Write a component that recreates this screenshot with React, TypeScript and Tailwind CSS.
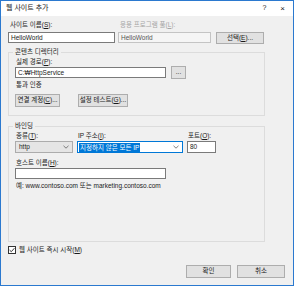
import React from "react";

function U({ children }: { children: React.ReactNode }) {
  return <span className="underline">{children}</span>;
}

function Btn({ children, className = "" }: { children: React.ReactNode; className?: string }) {
  return (
    <div
      className={`flex items-center justify-center border border-[#adadad] bg-[#e1e1e1] leading-none ${className}`}
    >
      {children}
    </div>
  );
}

function Chevron() {
  return (
    <svg width="6" height="4" viewBox="0 0 6 4" className="shrink-0">
      <path d="M0.5 0.8 L3 3.2 L5.5 0.8" fill="none" stroke="#606060" strokeWidth="0.8" />
    </svg>
  );
}

export default function App() {
  return (
    <div className="flex h-[286px] w-[294px] flex-col border border-[#2b79cf] bg-[#f0f0f0] font-['Liberation_Sans','Noto_Sans_CJK_KR',sans-serif] text-[6.5px] text-[#1a1a1a]">
      {/* title bar */}
      <div className="flex h-[15px] shrink-0 items-center bg-white pl-[5px] pr-[8px] text-[7px]">
        <span className="flex-1">웹 사이트 추가</span>
        <span className="mr-[14px] text-[7px]">?</span>
        <span className="text-[8px] leading-none">×</span>
      </div>

      <div className="flex flex-1 flex-col px-[7px] pt-[4px]">
        {/* site name row */}
        <div className="flex items-end">
          <div className="w-[107px]">
            <div className="ml-[2px] h-[10px] leading-[10px]">
              사이트 이름(<U>S</U>):
            </div>
            <div className="mt-[2px] flex h-[11px] items-center border border-[#7a7a7a] bg-white pl-[2px]">
              HelloWorld
            </div>
          </div>
          <div className="ml-[3px] w-[93px]">
            <div className="ml-[2px] h-[10px] leading-[10px] text-[#a6a6a6]">
              응용 프로그램 풀(<U>L</U>):
            </div>
            <div className="mt-[2px] flex h-[11px] items-center border border-[#c4c4c4] bg-[#f5f5f5] pl-[2px] text-[#555]">
              HelloWorld
            </div>
          </div>
          <Btn className="mb-[-1px] ml-[5px] h-[12px] w-[48px]">
            선택(<U>E</U>)...
          </Btn>
        </div>

        {/* content directory */}
        <fieldset className="mt-[4px] w-[257px] border border-[#dcdcdc] px-[6px] pb-[8px]">
          <legend className="ml-[-2px] px-[2px] leading-[10px]">콘텐츠 디렉터리</legend>
          <div className="ml-[1px] h-[10px] leading-[10px]">
            실제 경로(<U>P</U>):
          </div>
          <div className="flex items-start">
            <div className="flex h-[11px] w-[151px] items-center border border-[#7a7a7a] bg-white pl-[2px]">
              C:₩HttpService
            </div>
            <Btn className="mt-[-1px] ml-[5px] h-[13px] w-[15px]">...</Btn>
          </div>
          <div className="ml-[1px] mt-[1px] h-[10px] leading-[10px]">통과 인증</div>
          <div className="mt-[4px] flex">
            <Btn className="h-[13px] w-[45px]">
              연결 계정(<U>C</U>)...
            </Btn>
            <Btn className="ml-[18px] h-[13px] w-[50px]">
              설정 테스트(<U>G</U>)...
            </Btn>
          </div>
        </fieldset>

        {/* binding */}
        <fieldset className="mt-[5px] h-[121px] w-[257px] border border-[#dcdcdc] px-[6px]">
          <legend className="ml-[-2px] px-[2px] leading-[10px]">바인딩</legend>
          <div className="flex items-end">
            <div className="w-[58px]">
              <div className="ml-[1px] h-[10px] leading-[10px]">
                종류(<U>T</U>):
              </div>
              <div className="flex h-[12px] items-center justify-between border border-[#acacac] bg-[#e5e5e5] pl-[3px] pr-[3px]">
                <span>http</span>
                <Chevron />
              </div>
            </div>
            <div className="ml-[4px] w-[106px]">
              <div className="ml-[1px] h-[10px] leading-[10px]">
                IP 주소(<U>I</U>):
              </div>
              <div className="flex h-[12px] items-center justify-between border border-[#0078d7] bg-white pl-[1px] pr-[3px]">
                <span className="bg-[#0078d7] px-[1px] leading-[9px] text-white">지정하지 않은 모든 IP</span>
                <Chevron />
              </div>
            </div>
            <div className="ml-[4px] w-[29px]">
              <div className="ml-[1px] h-[10px] leading-[10px]">
                포트(<U>O</U>):
              </div>
              <div className="flex h-[12px] items-center border border-[#7a7a7a] bg-white pl-[2px]">80</div>
            </div>
          </div>
          <div className="ml-[1px] mt-[5px] h-[10px] leading-[10px]">
            호스트 이름(<U>H</U>):
          </div>
          <div className="h-[11px] w-[151px] border border-[#7a7a7a] bg-white" />
          <div className="ml-[1px] mt-[2px] h-[10px] leading-[10px]">
            예: www.contoso.com 또는 marketing.contoso.com
          </div>
        </fieldset>

        {/* start immediately */}
        <div className="mt-[3px] flex items-center">
          <svg width="8" height="8" viewBox="0 0 8 8" className="shrink-0">
            <rect x="0.5" y="0.5" width="7" height="7" fill="white" stroke="#333" strokeWidth="1" />
            <path d="M1.6 4.1 L3.3 5.7 L6.4 2.2" fill="none" stroke="#222" strokeWidth="0.9" />
          </svg>
          <span className="ml-[3px] leading-[10px]">
            웹 사이트 즉시 시작(<U>M</U>)
          </span>
        </div>

        {/* footer buttons */}
        <div className="mt-auto mb-[7px] flex justify-end">
          <Btn className="h-[13px] w-[45px] border-[#0078d7]">확인</Btn>
          <Btn className="ml-[6px] mr-[1px] h-[13px] w-[48px]">취소</Btn>
        </div>
      </div>
    </div>
  );
}
